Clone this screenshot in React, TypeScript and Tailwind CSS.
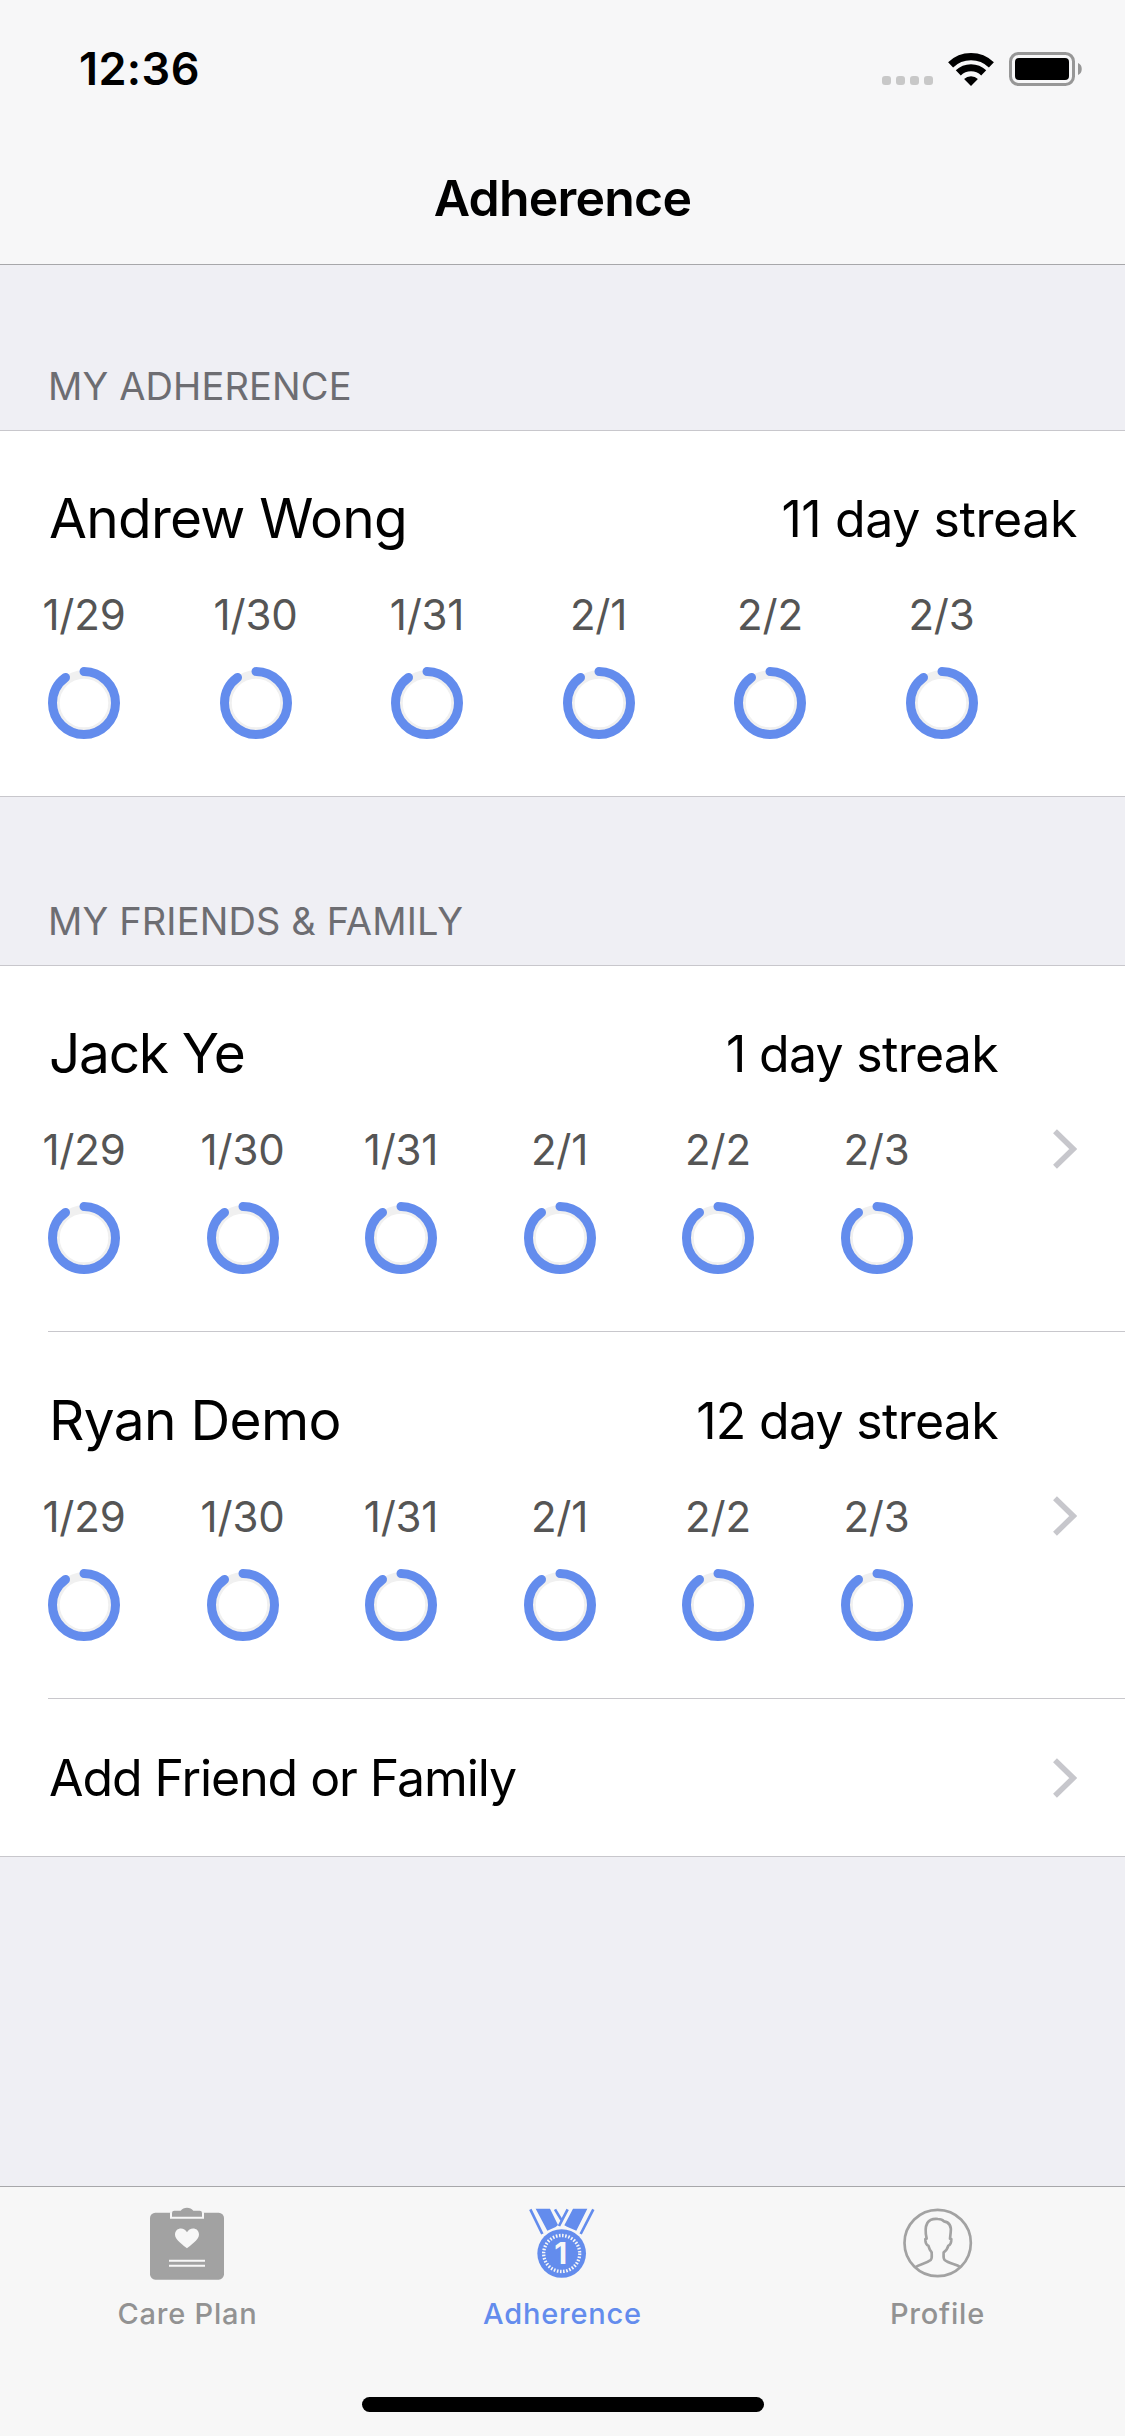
type Person = {
  name: string;
  nameClass: string;
  streak: string;
  streakClass: string;
  rowClass: string;
};

const days = ["1/29", "1/30", "1/31", "2/1", "2/2", "2/3"];

const me: Person = {
  name: "Andrew Wong",
  nameClass: "tracking-[-0.73px]",
  streak: "11 day streak",
  streakClass: "tracking-[-0.4px]",
  rowClass: "h-[365px] pt-[54px]",
};

const friends: Person[] = [
  {
    name: "Jack Ye",
    nameClass: "tracking-[-1.3px]",
    streak: "1 day streak",
    streakClass: "tracking-[-0.7px]",
    rowClass: "h-[365px] pt-[54px]",
  },
  {
    name: "Ryan Demo",
    nameClass: "tracking-[-0.67px]",
    streak: "12 day streak",
    streakClass: "tracking-[-0.7px]",
    rowClass: "h-[366px] pt-[55px]",
  },
];

const WifiIcon = () => (
  <svg className="w-[46px] h-[33px]" viewBox="0 0 46 33" fill="none">
    <path d="M2.6 11.9a29.4 29.4 0 0 1 40.8 0" stroke="#000" strokeWidth="7.2" />
    <path d="M10.3 19.9a18.2 18.2 0 0 1 25.4 0" stroke="#000" strokeWidth="7.2" />
    <path d="M23 33l-6.9-7.1a10 10 0 0 1 13.8 0z" fill="#000" />
  </svg>
);

const BatteryIcon = () => (
  <svg className="w-[74px] h-[34px]" viewBox="0 0 74 34" fill="none">
    <rect x="1.5" y="1.5" width="63" height="31" rx="8" stroke="#979797" strokeWidth="3" />
    <rect x="6" y="6" width="54" height="22" rx="4" fill="#000" />
    <path d="M69 11c5 1.500 5 10.500 0 12z" fill="#979797" />
  </svg>
);

const Chevron = () => (
  <svg className="w-6 h-10 mt-px shrink-0" viewBox="0 0 24 40" fill="none">
    <path d="M2 2.200L20.200 20L2 37.800" stroke="#c7c7cc" strokeWidth="5.500" />
  </svg>
);

const Ring = () => (
  <svg className="size-[72px]" viewBox="0 0 72 72" fill="none">
    <circle cx="36" cy="36" r="28.500" stroke="#f0f0f0" strokeWidth="8.500" />
    <circle
      cx="36"
      cy="36"
      r="31.500"
      stroke="#638ced"
      strokeWidth="9"
      strokeLinecap="round"
      pathLength="100"
      strokeDasharray="90 100"
      transform="rotate(-90 36 36)"
    />
  </svg>
);

const CarePlanIcon = () => (
  <svg className="size-20" viewBox="2 0 240 240">
    <rect x="8" y="29" width="222" height="201" rx="16" fill="#a2a2a2" />
    <path d="M68 28h102v19H68z" fill="#f7f7f7" />
    <path d="M74 41V30q0-7 7-7h19c8-12 30-12 38 0h19q7 0 7 7v11z" fill="#a2a2a2" />
    <path
      d="M119 136c-8-8-36-25-36-41 0-22 28-24 36-7 8-17 36-15 36 7 0 16-28 33-36 41z"
      fill="#f7f7f7"
    />
    <path d="M65 170h108v6H65zM65 185h108v6H65z" fill="#f7f7f7" />
  </svg>
);

const MedalIcon = () => (
  <svg className="size-20" viewBox="2 0 240 240" fill="none">
    <path d="M24 19L60 93M98 19L118 52M136 19L110 69M213 19L175 93" stroke="#638ced" strokeWidth="8" />
    <path d="M40 17h43l24 49-7 6-25 11zM152 17h43l-33 66-28-12-8-4z" fill="#638ced" />
    <circle cx="118" cy="151.500" r="73" fill="#638ced" />
    <circle
      cx="118"
      cy="151.500"
      r="54"
      stroke="#f7f7f7"
      strokeWidth="10"
      pathLength="288"
      strokeDasharray="4 4"
    />
    <text x="115" y="184" textAnchor="middle" fill="#f7f7f7" className="font-bold text-[90px]">
      1
    </text>
  </svg>
);

const ProfileIcon = () => (
  <svg className="size-20" viewBox="1 0 240 240" fill="none" stroke="#a2a2a2" strokeWidth="8" strokeLinejoin="round">
    <circle cx="120" cy="120" r="99.500" />
    <path d="M54 192c12-9 32-10 45-21 5-5 3-14 3-23-5-6-8-12-10-20-7-2-9-12-9-20l4-1c-4-17-4-36 2-47 7-12 21-13 32-12 7 0 13 1 18 7 19 3 22 19 20 34l-2 18 4 1c0 8-2 18-9 20-2 8-5 14-14 20 0 9-2 18 3 23 13 11 33 12 47 21" />
  </svg>
);

const StatusBar = () => (
  <div className="flex items-center justify-between h-[132px] pl-[79px] pr-[42px]">
    <span className="text-[45px] leading-[54px] font-semibold tracking-[0.4px] mt-[6px]">12:36</span>
    <div className="flex items-center mt-[6px]">
      <div className="flex gap-[5px] mt-[23px] mr-[15px]">
        {[0, 1, 2, 3].map((dot) => (
          <span key={dot} className="size-[9px] rounded-[3px] bg-[#c8c8c8]" />
        ))}
      </div>
      <WifiIcon />
      <div className="ml-[15px]">
        <BatteryIcon />
      </div>
    </div>
  </div>
);

const SectionTitle = ({ children }: { children: string }) => (
  <h2 className="pl-12 pb-[21px] text-[38px] leading-[46px] tracking-[0.13px] text-[#6d6d72]">
    {children}
  </h2>
);

const PersonRow = ({ person, friend = false }: { person: Person; friend?: boolean }) => (
  <div className="flex items-center">
    <div className={`flex-1 ${person.rowClass}`}>
      <div className="flex items-center justify-between h-[66px]">
        <span className={`ml-px text-[55px] leading-[66px] ${person.nameClass}`}>{person.name}</span>
        <span className={`text-[50px] leading-[60px] mt-[2px] ${person.streakClass}`}>{person.streak}</span>
      </div>
      <div className={`flex mt-[38px] ${friend ? "gap-[86.5px]" : "gap-[99.5px]"}`}>
        {days.map((day) => (
          <div key={day} className="flex flex-col items-center gap-[27px] pt-px w-[72px]">
            <span className="text-[42px] leading-[50px] tracking-[-0.2px] text-[#555]">{day}</span>
            <Ring />
          </div>
        ))}
      </div>
    </div>
    {friend && (
      <div className="ml-[55px]">
        <Chevron />
      </div>
    )}
  </div>
);

const Tab = ({ label, active = false, children }: { label: string; active?: boolean; children: React.ReactNode }) => (
  <div className="flex flex-col items-center flex-1 gap-[13px] pt-[16px]">
    {children}
    <span
      className={`text-[29px] leading-9 font-medium tracking-[0.8px] ${active ? "text-[#638ced]" : "text-[#929292]"}`}
    >
      {label}
    </span>
  </div>
);

export default function App() {
  return (
    <div className="flex flex-col w-[1125px] h-[2436px] bg-[#efeff4] text-black font-[Inter,sans-serif] overflow-hidden">
      <header className="bg-[#f7f7f8] border-b border-[#a7a7aa]">
        <StatusBar />
        <h1 className="h-[132px] text-center text-[50px] leading-[132px] font-semibold tracking-[-0.8px]">
          Adherence
        </h1>
      </header>

      <main className="flex-1">
        <section>
          <div className="flex items-end h-[165px]">
            <SectionTitle>MY ADHERENCE</SectionTitle>
          </div>
          <div className="px-12 bg-white border-y border-[#c8c7cc]">
            <PersonRow person={me} />
          </div>
        </section>

        <section>
          <div className="flex items-end h-[168px]">
            <SectionTitle>{"MY FRIENDS & FAMILY"}</SectionTitle>
          </div>
          <div className="pl-12 bg-white border-y border-[#c8c7cc]">
            {friends.map((friend) => (
              <div key={friend.name} className="pr-12 border-b border-[#c8c7cc]">
                <PersonRow person={friend} friend />
              </div>
            ))}
            <div className="flex items-center justify-between h-[157px] pr-12">
              <span className="ml-px mt-px text-[50px] tracking-[-1.07px]">Add Friend or Family</span>
              <Chevron />
            </div>
          </div>
        </section>
      </main>

      <nav className="flex flex-col h-[250px] bg-[#f7f7f7] border-t border-[#a7a7aa]">
        <div className="flex">
          <Tab label="Care Plan">
            <CarePlanIcon />
          </Tab>
          <Tab label="Adherence" active>
            <MedalIcon />
          </Tab>
          <Tab label="Profile">
            <ProfileIcon />
          </Tab>
        </div>
        <div className="w-[402px] h-[15px] mt-auto mb-6 mx-auto bg-black rounded-full" />
      </nav>
    </div>
  );
}
